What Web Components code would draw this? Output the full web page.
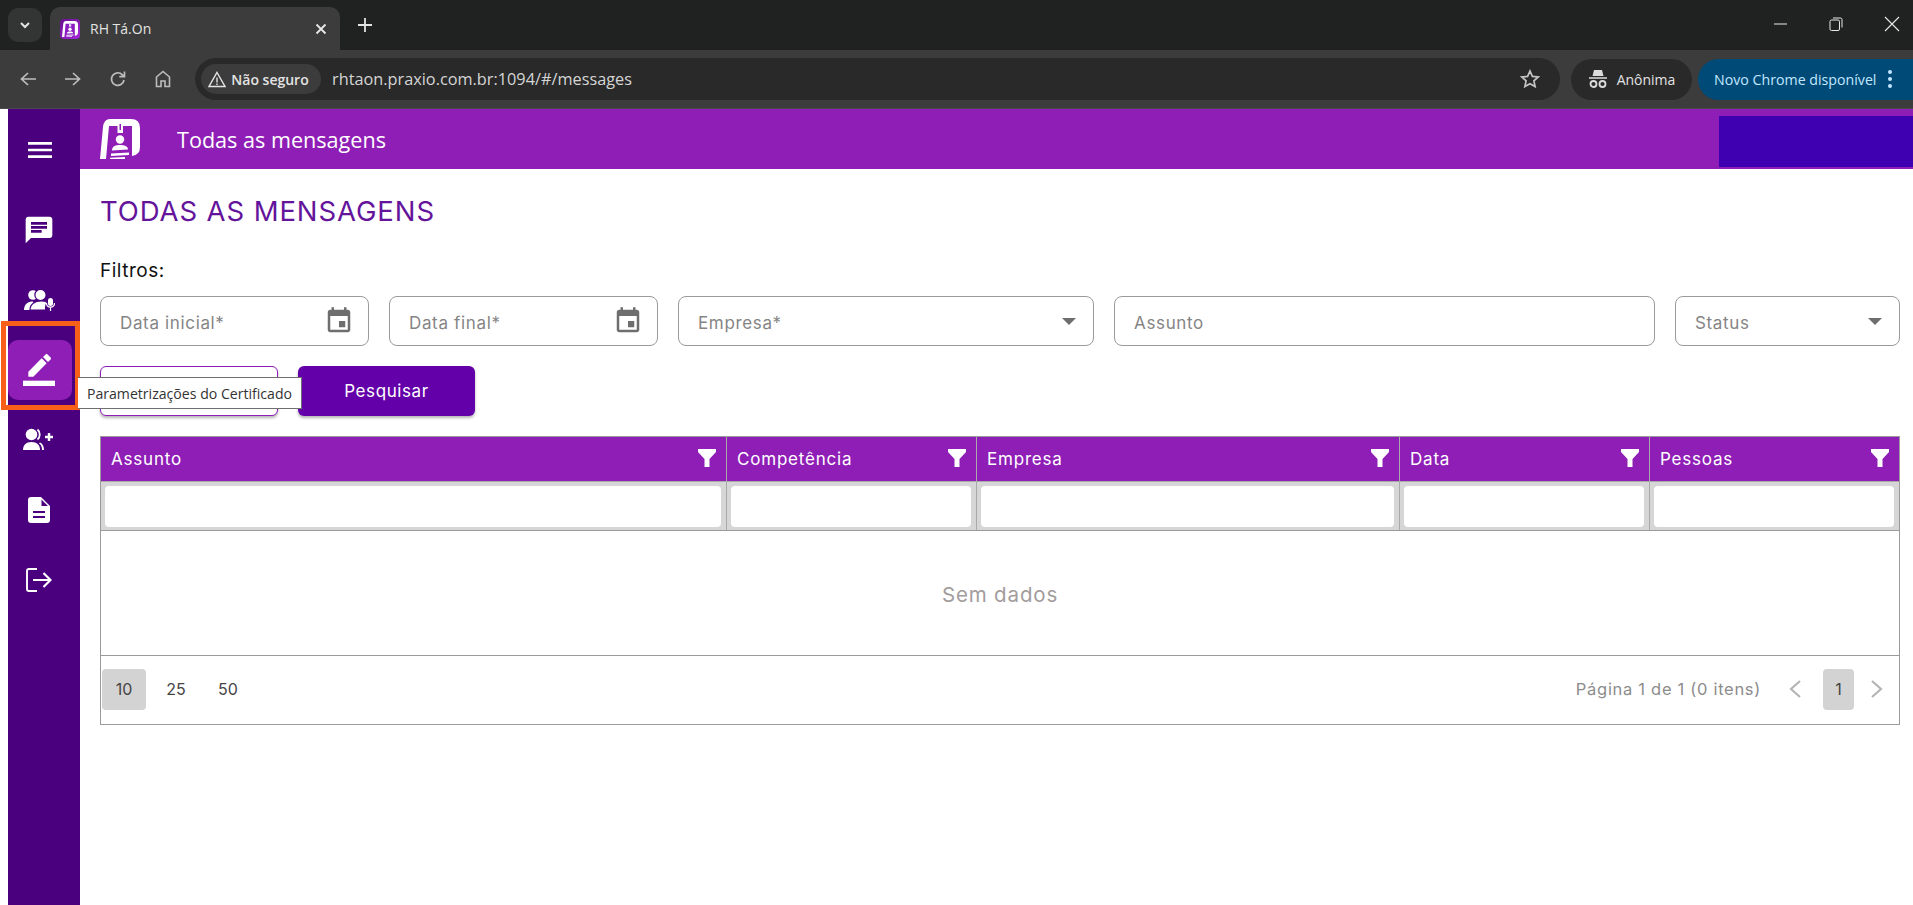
<!DOCTYPE html>
<html lang="pt-BR">
<head>
<meta charset="utf-8">
<title>RH Tá.On</title>
<style>
  html, body { margin: 0; height: 100%; overflow: hidden; background: #fff; }
  body { display: flex; flex-direction: column; font-family: "Open Sans", "Liberation Sans", sans-serif; }
</style>
</head>
<body>
<browser-chrome></browser-chrome>
<app-shell>
  <side-nav slot="nav"></side-nav>
  <top-bar slot="top" heading="Todas as mensagens"></top-bar>
  <messages-page></messages-page>
</app-shell>

<script>
const LOGO = (fg, cut) => `<svg viewBox="0 0 40 40" width="100%" height="100%">
  <path fill="${fg}" d="M10 0H31Q40 0 40 9V28Q40 36 32 37V40H0L3 8Q4 0 10 0Z"/>
  <path fill="${cut}" d="M9 7H32V40H6Z"/>
  <path fill="${fg}" d="M17.500 5H23V14H17.500Z"/>
  <path fill="${cut}" d="M19.500 5H21V11H19.500Z"/>
  <circle fill="${fg}" cx="20" cy="20.500" r="4.200"/>
  <path fill="${fg}" d="M12 31.500C12 27 16 26 20 26S28 27 28 30.500ZM11 34.500L29 33.500V36L11 37ZM10 38.800L25 38V40H10Z"/>
</svg>`;

class BrowserChrome extends HTMLElement {
  connectedCallback() {
    const root = this.attachShadow({ mode: 'open' });
    root.innerHTML = `
    <style>
      :host { display: block; flex: none; font-family: "Open Sans", "Liberation Sans", sans-serif; color: #e3e3e3; }
      .strip { height: 50px; background: #202221; display: flex; align-items: flex-end; padding-left: 8px; box-sizing: border-box; }
      .list { width: 34px; height: 34px; margin-bottom: 8px; border-radius: 10px; background: #333534; display: grid; place-items: center; }
      .tab { width: 290px; height: 43px; margin-left: 8px; background: #3c3c3c; border-radius: 10px 10px 0 0; display: flex; align-items: center; padding: 0 12px 0 10px; box-sizing: border-box; font-size: 14px; }
      .fav { width: 20px; height: 20px; border-radius: 4px; background: linear-gradient(135deg, #6a0f8e, #a626e0); padding: 1px 2px; box-sizing: border-box; margin-right: 10px; }
      .tab span { flex: 1; }
      .new { margin-left: 8px; margin-bottom: 8px; width: 34px; height: 34px; display: grid; place-items: center; }
      .win { margin-left: auto; display: flex; gap: 14px; align-self: flex-start; }
      .win div { width: 42px; height: 48px; display: grid; place-items: center; }
      .bar { height: 59px; background: #3c3c3c; border-bottom: 1px solid #4a4a4a; box-sizing: border-box; display: flex; align-items: center; padding-left: 5px; }
      .nav { width: 45px; display: grid; place-items: center; flex: none; }
      .omni { margin-left: 10px; width: 1365px; height: 42px; border-radius: 21px; background: #292929; display: flex; align-items: center; padding: 0 6px; box-sizing: border-box; flex: none; }
      .chip { height: 30px; width: 120px; flex: none; border-radius: 15px; background: #3c3c3c; display: flex; align-items: center; justify-content: center; gap: 5px; padding-right: 5px; box-sizing: border-box; font-size: 14px; font-weight: 600; }
      .url { margin-left: 11px; font-size: 16.300px; color: #d5d5d5; flex: 1; }
      .star { margin-right: 14px; display: grid; }
      .pill { height: 41px; border-radius: 21px; display: flex; align-items: center; flex: none; font-size: 14px; }
      .anon { margin-left: 11px; width: 121px; background: #292929; justify-content: center; gap: 9px; }
      .update { margin-left: 6px; width: 215px; background: #004a77; color: #c2e7ff; padding-left: 16px; box-sizing: border-box; gap: 11px; border-radius: 21px 0 0 21px; font-size: 14.200px; }
    </style>
    <div class="strip">
      <div class="list"><svg width="14" height="14" viewBox="0 0 14 14"><path d="M3 5l4 4 4-4" fill="none" stroke="#e3e3e3" stroke-width="2"/></svg></div>
      <div class="tab">
        <div class="fav">${LOGO('#fff', '#8a1cc0')}</div>
        <span>RH Tá.On</span>
        <svg width="14" height="14" viewBox="0 0 14 14"><path d="M2.500 2.500l9 9m0-9l-9 9" stroke="#e8e8e8" stroke-width="1.800"/></svg>
      </div>
      <div class="new"><svg width="16" height="16" viewBox="0 0 16 16"><path d="M8 1v14M1 8h14" stroke="#e3e3e3" stroke-width="1.800"/></svg></div>
      <div class="win">
        <div><svg width="14" height="14" viewBox="0 0 14 14"><path d="M1 7h13" stroke="#e8e8e8"/></svg></div>
        <div><svg width="14" height="14" viewBox="0 0 14 14"><rect x="1" y="3" width="9.500" height="10.500" rx="1.500" fill="none" stroke="#e8e8e8"/><path d="M4 1h7.500q1.500 0 1.500 1.500v8" fill="none" stroke="#e8e8e8"/></svg></div>
        <div><svg width="16" height="16" viewBox="0 0 16 16"><path d="M1 1l14 14m0-14L1 15" stroke="#e8e8e8" stroke-width="1.100"/></svg></div>
      </div>
    </div>
    <div class="bar">
      <div class="nav"><svg width="18" height="18" viewBox="0 0 18 18"><path d="M17 9H3M9 3L2.500 9 9 15" fill="none" stroke="#bdbdbd" stroke-width="1.700"/></svg></div>
      <div class="nav"><svg width="18" height="18" viewBox="0 0 18 18"><path d="M1 9h14M9 3l6.500 6L9 15" fill="none" stroke="#bdbdbd" stroke-width="1.700"/></svg></div>
      <div class="nav"><svg width="18" height="18" viewBox="0 0 18 18"><path d="M15 10a6.300 6.300 0 1 1-1.600-5.200L15 6.500M15.500 1.500v5.200h-5.200" fill="none" stroke="#bdbdbd" stroke-width="1.700"/></svg></div>
      <div class="nav"><svg width="18" height="18" viewBox="0 0 18 18"><path d="M2.500 16.500V7L9 1.500 15.500 7v9.500h-4.500v-5.500H7v5.500Z" fill="none" stroke="#bdbdbd" stroke-width="1.600"/></svg></div>
      <div class="omni">
        <div class="chip"><svg width="18" height="17" viewBox="0 0 18 17"><path d="M9 1.500L17 15.500H1Z" fill="none" stroke="#e3e3e3" stroke-width="1.400"/><path d="M9 6.500v5M9 12.500v1.500" stroke="#e3e3e3" stroke-width="1.400"/></svg>Não seguro</div>
        <div class="url">rhtaon.praxio.com.br:1094/#/messages</div>
        <div class="star"><svg width="20" height="20" viewBox="0 0 20 20"><path d="M10 2l2.400 5.400 5.800.6-4.300 3.900 1.200 5.700L10 14.700l-5.100 2.900 1.200-5.700L1.800 8l5.800-.6Z" fill="none" stroke="#c4c4c4" stroke-width="1.700"/></svg></div>
      </div>
      <div class="pill anon"><svg width="20" height="20" viewBox="0 0 20 20" fill="#dcdcdc"><path d="M6 1h8l1.500 6h-11zM1 8.200h18v1.600H1z"/><circle cx="5.500" cy="15" r="3" fill="none" stroke="#dcdcdc" stroke-width="1.800"/><circle cx="14.500" cy="15" r="3" fill="none" stroke="#dcdcdc" stroke-width="1.800"/></svg>Anônima</div>
      <div class="pill update">Novo Chrome disponível<svg width="6" height="20" viewBox="0 0 6 20" fill="#c2e7ff"><circle cx="3" cy="3" r="2"/><circle cx="3" cy="10" r="2"/><circle cx="3" cy="17" r="2"/></svg></div>
    </div>`;
  }
}
customElements.define('browser-chrome', BrowserChrome);

class AppShell extends HTMLElement {
  connectedCallback() {
    const root = this.attachShadow({ mode: 'open' });
    root.innerHTML = `
    <style>
      :host { display: flex; flex: 1; min-height: 0; padding-left: 8px; position: relative; }
      .right { flex: 1; min-width: 0; display: flex; flex-direction: column; }
    </style>
    <slot name="nav"></slot>
    <div class="right"><slot name="top"></slot><slot></slot></div>`;
  }
}
customElements.define('app-shell', AppShell);

class SideNav extends HTMLElement {
  connectedCallback() {
    const root = this.attachShadow({ mode: 'open' });
    root.innerHTML = `
    <style>
      :host { display: flex; flex-direction: column; width: 72px; flex: none; background: #4a007e; position: relative; }
      .item { height: 70px; display: flex; align-items: center; justify-content: center; padding-right: 11px; box-sizing: border-box; flex: none; }
      .item.menu { margin: 6px 0 10px; padding-right: 9px; }
      .item.on { background: #8f1eb6; border-radius: 10px; width: 64px; height: 60px; padding-right: 3px; margin: 5px 0; }
      svg { fill: #fff; display: block; }
      .mark { position: absolute; left: -7px; top: 212px; width: 79px; height: 89px; box-sizing: border-box; border: 5px solid #f8601a; pointer-events: none; }
      .tip { position: absolute; left: 70px; top: 268px; height: 32px; width: 224px; background: #fff; box-sizing: border-box; border: 1px solid #6f6f6f; border-left: 0; font: 14.100px "Open Sans", "Liberation Sans", sans-serif; color: #333; display: flex; align-items: center; justify-content: center; white-space: nowrap; z-index: 3; }
    </style>
    <div class="item menu"><svg width="32" height="32" viewBox="0 0 24 24"><path d="M3 18h18v-2H3v2zm0-5h18v-2H3v2zm0-7v2h18V6H3z"/></svg></div>
    <div class="item"><svg width="32" height="32" viewBox="0 0 24 24"><path d="M20 2H4c-1.100 0-1.990.900-1.990 2L2 22l4-4h14c1.100 0 2-.900 2-2V4c0-1.100-.900-2-2-2zM6 9h12v2H6V9zm8 5H6v-2h8v2zm4-6H6V6h12v2z"/></svg></div>
    <div class="item"><svg width="32" height="22" viewBox="0 0 32 22"><circle cx="10" cy="6" r="4.800"/><circle cx="17.500" cy="6" r="5.600" stroke="#4a007e" stroke-width="1.200"/><path d="M1 21c0-6 4-8.500 9-8.500l3 8.500z"/><path d="M7 21c0-6 5-9 11-9 3 0 5 .500 6.500 1.500-1.500 1-2 3-2 7.500z" stroke="#4a007e" stroke-width="1.200"/><rect x="25" y="9" width="5" height="8" rx="2.500"/><path d="M23.500 14c0 5.500 8 5.500 8 0M27.500 18v4" fill="none" stroke="#fff" stroke-width="1.200"/></svg></div>
    <div class="item on"><svg width="32" height="32" viewBox="0 0 24 24"><path d="M17.750 7L14 3.250l-10 10V17h3.750l10-10zm2.960-2.960c.390-.390.390-1.020 0-1.410L18.370.290c-.390-.390-1.020-.390-1.410 0L15 2.250 18.750 6l1.960-1.960z"/><path d="M0 20h24v4H0z"/></svg></div>
    <div class="item"><svg width="32" height="24" viewBox="0 0 32 24"><circle cx="8.500" cy="6.500" r="5.800"/><path d="M0 22c0-5 3-8 8.500-8s8.500 3 8.500 8z"/><path d="M14.500 1.500c3 2.500 3 7.500 0 10" fill="none" stroke="#fff" stroke-width="1.800"/><path d="M17 14.500c2.500 1 4 3.500 4 7.500h-2c0-3-1-5.500-3-6.500z"/><path d="M26 5v8M22 9h8" stroke="#fff" stroke-width="2.400"/></svg></div>
    <div class="item"><svg width="22" height="26" viewBox="0 0 22 26"><path fill-rule="evenodd" d="M3 0h10l9 9v14q0 3-3 3H3q-3 0-3-3V3q0-3 3-3zM5 14v2h12v-2zM5 19v2h12v-2zM13.500 2.500v6.500h6.500z"/></svg></div>
    <div class="item"><svg width="26" height="24" viewBox="0 0 26 24"><path d="M11 1H3Q1 1 1 3v18q0 2 2 2h8" fill="none" stroke="#fff" stroke-width="1.900"/><path d="M7 12h17M17.500 5l7 7-7 7" fill="none" stroke="#fff" stroke-width="2.200"/></svg></div>
    <div class="mark"></div>
    <div class="tip">Parametrizações do Certificado</div>`;
  }
}
customElements.define('side-nav', SideNav);

class TopBar extends HTMLElement {
  connectedCallback() {
    const root = this.attachShadow({ mode: 'open' });
    root.innerHTML = `
    <style>
      :host { display: flex; align-items: center; height: 60px; flex: none; background: #8f1eb6; padding-left: 20px; color: #fff; position: relative; }
      .logo { width: 40px; height: 40px; margin-right: 37px; }
      .title { font: 21.600px "Open Sans", "Liberation Sans", sans-serif; }
      .user { position: absolute; right: 0; top: 7px; width: 194px; height: 51px; background: #3f00b2; }
    </style>
    <div class="logo">${LOGO('#fff', '#8f1eb6')}</div>
    <div class="title">${this.getAttribute('heading')}</div>
    <div class="user"></div>`;
  }
}
customElements.define('top-bar', TopBar);

class FilterField extends HTMLElement {
  connectedCallback() {
    const root = this.attachShadow({ mode: 'open' });
    const icon = this.getAttribute('icon');
    let glyph = '';
    if (icon === 'date') {
      glyph = '<svg width="30" height="30" viewBox="0 0 24 24" fill="#6e6e6e"><path d="M17 12h-5v5h5v-5zM16 1v2H8V1H6v2H5c-1.110 0-1.990.900-1.990 2L3 19c0 1.100.890 2 2 2h14c1.100 0 2-.900 2-2V5c0-1.100-.900-2-2-2h-1V1h-2zm3 18H5V8h14v11z"/></svg>';
    } else if (icon === 'drop') {
      glyph = '<svg width="14" height="7" viewBox="0 0 14 7" fill="#6e6e6e"><path d="M0 0h14L7 7z"/></svg>';
    }
    root.innerHTML = `
    <style>
      :host { display: flex; align-items: center; box-sizing: border-box; height: 50px; background: #fff; border: 1px solid #9a9a9a; border-radius: 8px; padding: 0 19px; font: 17px Inter, "Open Sans", sans-serif; letter-spacing: .65px; color: #858585; }
      span { flex: 1; padding-top: 4px; }
      svg { display: block; flex: none; }
      :host([icon="date"]) { padding-right: 14px; }
      :host([icon="drop"]) { padding-right: 17px; }
    </style>
    <span><slot></slot></span>${glyph}`;
  }
}
customElements.define('filter-field', FilterField);

class DataGrid extends HTMLElement {
  connectedCallback() {
    const root = this.attachShadow({ mode: 'open' });
    const cols = ['Assunto', 'Competência', 'Empresa', 'Data', 'Pessoas'];
    const funnel = '<svg width="20" height="20" viewBox="0 0 20 20" fill="#fff"><path d="M1 1h18v3l-6.500 7v8h-5v-8L1 4z"/></svg>';
    root.innerHTML = `
    <style>
      :host { display: block; box-sizing: border-box; border: 1px solid #9a9a9a; font-family: Inter, "Open Sans", sans-serif; }
      .row { display: grid; grid-template-columns: 625px 250px 423px 250px 1fr; }
      .head { background: #8f1eb6; color: #fff; height: 44px; }
      .head div { display: flex; align-items: center; justify-content: space-between; padding: 0 9px 0 10px; font-size: 17px; letter-spacing: .8px; border-left: 1px solid #a9a9a9; }
      .head div:first-child, .search div:first-child { border-left: 0; }
      .head svg { margin-top: -3px; }
      .search { background: #d6d6d6; height: 50px; border-top: 1px solid #a9a9a9; border-bottom: 1px solid #9a9a9a; box-sizing: border-box; }
      .search div { padding: 4px 5px 3px 4px; border-left: 1px solid #a9a9a9; display: flex; }
      .search i { flex: 1; background: #fff; border-radius: 4px; }
      .empty { height: 125px; padding-top: 2px; box-sizing: border-box; display: flex; align-items: center; justify-content: center; color: #a39c9c; font-size: 20.500px; letter-spacing: .85px; border-bottom: 1px solid #9a9a9a; }
      .foot { height: 68px; padding: 0 1px 2px; box-sizing: border-box; display: flex; align-items: center; font-size: 16px; color: #444; }
      .num { height: 41px; display: grid; place-items: center; border-radius: 4px; box-sizing: border-box; }
      .num.on { background: #d3d3d3; }
      .sizes { display: flex; }
      .sizes .num { width: 44px; }
      .sizes .num + .num { width: 52px; }
      .sizes .num.on + .num { margin-left: 4px; }
      .pages { margin-left: auto; display: flex; align-items: center; padding-right: 14px; }
      .info { color: #8c8c8c; margin-right: 27px; font-size: 16.500px; letter-spacing: .7px; }
      .pages svg { display: block; }
      .pages .num { width: 31px; margin: 0 16px 0 21px; }
    </style>
    <div class="row head">${cols.map(c => `<div>${c}${funnel}</div>`).join('')}</div>
    <div class="row search">${cols.map(() => '<div><i></i></div>').join('')}</div>
    <div class="empty">Sem dados</div>
    <div class="foot">
      <div class="sizes"><div class="num on">10</div><div class="num">25</div><div class="num">50</div></div>
      <div class="pages">
        <span class="info">Página 1 de 1 (0 itens)</span>
        <svg width="14" height="20" viewBox="0 0 14 20"><path d="M12 2L3 10l9 8" fill="none" stroke="#b4b4b4" stroke-width="2.200"/></svg>
        <div class="num on">1</div>
        <svg width="14" height="20" viewBox="0 0 14 20"><path d="M2 2l9 8-9 8" fill="none" stroke="#b4b4b4" stroke-width="2.200"/></svg>
      </div>
    </div>`;
  }
}
customElements.define('data-grid', DataGrid);

class MessagesPage extends HTMLElement {
  connectedCallback() {
    const root = this.attachShadow({ mode: 'open' });
    root.innerHTML = `
    <style>
      :host { display: block; padding: 0 13px 0 20px; font-family: Inter, "Open Sans", sans-serif; }
      h1 { margin: 22px 0 0; height: 40px; line-height: 40px; font-size: 27.500px; font-weight: 400; letter-spacing: .9px; color: #63149b; }
      .label { margin-top: 23px; height: 34px; line-height: 34px; font-size: 19px; letter-spacing: .5px; color: #111; }
      .fields { display: grid; grid-template-columns: 269px 269px 416px 541px 1fr; gap: 20px; margin-top: 8px; }
      .actions { display: flex; gap: 20px; margin: 20px 0; }
      .ghost, .go { width: 177px; height: 50px; border-radius: 6px; box-sizing: border-box; box-shadow: 0 2px 3px rgba(0,0,0,.3); }
      .ghost { width: 178px; background: #fff; border: 1px solid #8f1eb6; }
      .go { background: #6300aa; color: #fff; font-size: 17px; letter-spacing: .6px; display: grid; place-items: center; }
    </style>
    <h1>TODAS AS MENSAGENS</h1>
    <div class="label">Filtros:</div>
    <div class="fields">
      <filter-field icon="date">Data inicial*</filter-field>
      <filter-field icon="date">Data final*</filter-field>
      <filter-field icon="drop">Empresa*</filter-field>
      <filter-field>Assunto</filter-field>
      <filter-field icon="drop">Status</filter-field>
    </div>
    <div class="actions"><div class="ghost"></div><div class="go">Pesquisar</div></div>
    <data-grid></data-grid>`;
  }
}
customElements.define('messages-page', MessagesPage);
</script>
</body>
</html>
